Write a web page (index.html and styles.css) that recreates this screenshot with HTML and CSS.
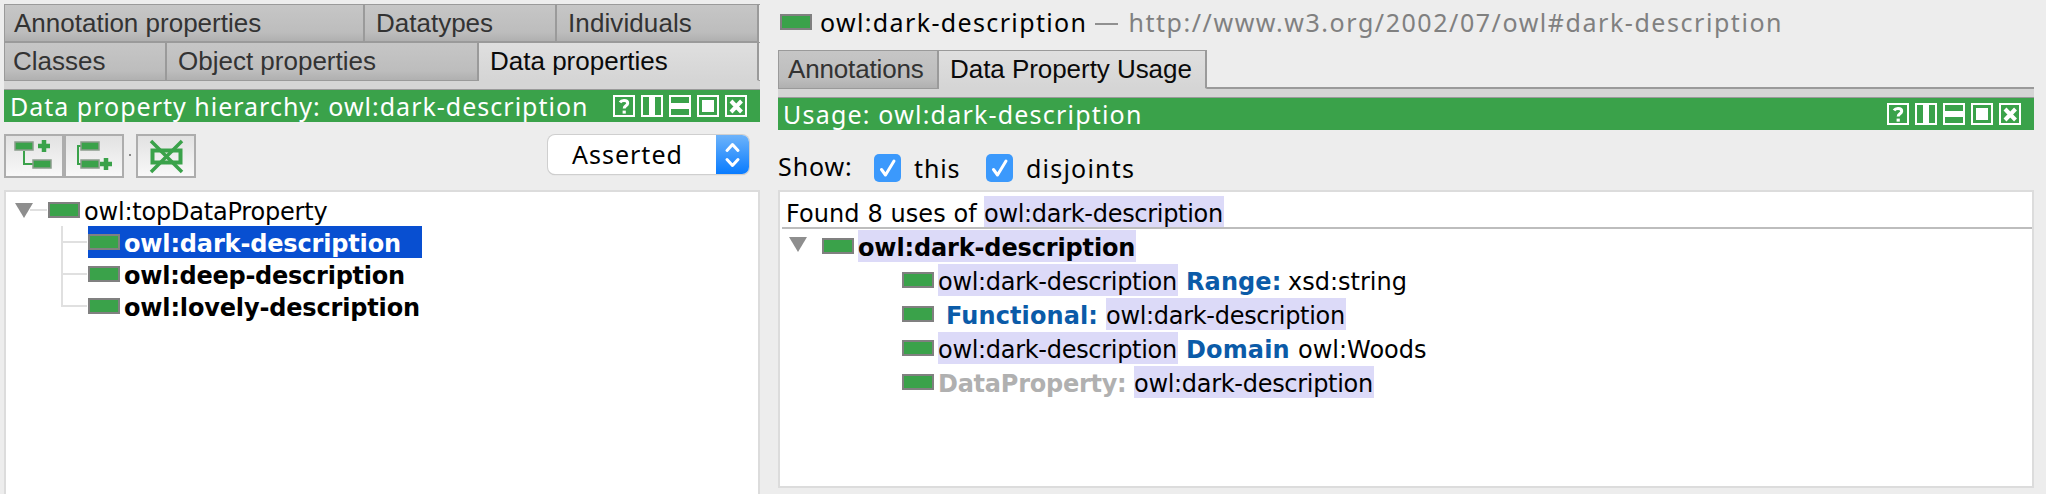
FILE: index.html
```html
<!DOCTYPE html>
<html lang="en">
<head>
<meta charset="utf-8">
<title>Data properties</title>
<link rel="stylesheet" href="styles.css">
</head>
<body>
<svg class="defs" width="0" height="0">
  <symbol id="win-help" viewBox="0 0 22 22"><path d="M1 1h20v20H1z" fill="none" stroke="#fff" stroke-width="2"/><path d="M7 7.400C8 5.800 9.500 5.500 11 5.500c2.300 0 3.700 1 3.700 2.700 0 2.600-3.500 2.600-3.500 5.300" fill="none" stroke="#fff" stroke-width="3"/><path d="M9.600 15.600h3.200v3H9.600z" fill="#fff"/></symbol>
  <symbol id="win-vert" viewBox="0 0 22 22"><path d="M1 1h20v20H1z" fill="none" stroke="#fff" stroke-width="2"/><path d="M8 2h6v18H8z" fill="#fff"/></symbol>
  <symbol id="win-horiz" viewBox="0 0 22 22"><path d="M1 1h20v20H1z" fill="none" stroke="#fff" stroke-width="2"/><path d="M2 8h18v6H2z" fill="#fff"/></symbol>
  <symbol id="win-max" viewBox="0 0 22 22"><path d="M1 1h20v20H1z" fill="none" stroke="#fff" stroke-width="2"/><path d="M5 5h12v12H5z" fill="#fff"/></symbol>
  <symbol id="win-close" viewBox="0 0 22 22"><path d="M1 1h20v20H1z" fill="none" stroke="#fff" stroke-width="2"/><path d="M6 6l10.500 11M16.500 6L6 17" fill="none" stroke="#fff" stroke-width="4"/></symbol>
  <symbol id="check" viewBox="0 0 26 28"><path d="M7 15.500l4 5.500L19.500 7" fill="none" stroke="#fff" stroke-width="3" stroke-linecap="round" stroke-linejoin="round"/></symbol>
</svg>

<section class="panel left">
  <div class="tabs">
    <div class="tabrow first">
      <div class="tab t-annprops">Annotation properties</div>
      <div class="tab t-datatypes">Datatypes</div>
      <div class="tab t-individuals">Individuals</div>
    </div>
    <div class="tabrow second">
      <div class="tab t-classes">Classes</div>
      <div class="tab t-objprops">Object properties</div>
      <div class="tab t-dataprops active">Data properties</div>
      <div class="tabrest"></div>
    </div>
    <div class="strip"></div>
  </div>
  <div class="titlebar">
    <span class="title hier">Data property hierarchy: owl:dark-description</span>
    <span class="winbtns">
      <svg><use href="#win-help"/></svg><svg><use href="#win-vert"/></svg><svg><use href="#win-horiz"/></svg><svg><use href="#win-max"/></svg><svg><use href="#win-close"/></svg>
    </span>
  </div>
  <div class="toolbar">
    <div class="btngroup">
      <button class="tool"><svg width="56" height="40" viewBox="6 136 56 40"><path d="M24 151v13h9" fill="none" stroke="#3aa24a" stroke-width="2"/><path d="M15 142h18v8H15zM33 160h18v8H33z" fill="#3aa24a" stroke="#8b9c8c" stroke-width="1.500"/><path d="M38 146h12M44 140v12" stroke="#3aa24a" stroke-width="4.500"/></svg></button>
      <button class="tool"><svg width="56" height="40" viewBox="66 136 56 40"><path d="M81 146h-3v18h3" fill="none" stroke="#3aa24a" stroke-width="2"/><path d="M81 142h18v8H81zM81 160h18v8H81z" fill="#3aa24a" stroke="#8b9c8c" stroke-width="1.500"/><path d="M100 164h12M106 158v12" stroke="#3aa24a" stroke-width="4.500"/></svg></button>
    </div>
    <i class="dot"></i>
    <button class="tool"><svg width="56" height="40" viewBox="138 136 56 40"><path d="M152.500 150.500h28v12h-28z" fill="none" stroke="#3aa24a" stroke-width="4"/><path d="M151 141l31 31M182 141l-31 31" stroke="#3aa24a" stroke-width="3.500"/></svg></button>
    <div class="combo"><span>Asserted</span><svg width="33" height="40" viewBox="0 0 33 40"><path d="M11 15.500l5.500-6 5.500 6M11 24.500l5.500 6 5.500-6" fill="none" stroke="#fff" stroke-width="3" stroke-linecap="round" stroke-linejoin="round"/></svg></div>
  </div>
  <div class="tree box">
    <div class="node root"><svg class="tri" width="18" height="15"><path d="M0 0h18L9 15z" fill="#8e8e8e"/></svg><i class="stub"></i><i class="prop"></i><span class="label top">owl:topDataProperty</span></div>
    <ul class="children">
      <li class="node sel"><span class="hit"><i class="prop"></i><span class="label">owl:dark-description</span></span></li>
      <li class="node"><span class="hit"><i class="prop"></i><span class="label deep">owl:deep-description</span></span></li>
      <li class="node"><span class="hit"><i class="prop"></i><span class="label">owl:lovely-description</span></span></li>
    </ul>
  </div>
</section>

<section class="panel right">
  <header class="entity"><i class="prop small"></i><span class="name">owl:dark-description</span><span class="dash"></span><span class="iri">http://www.w3.org/2002/07/owl#dark-description</span></header>
  <div class="tabs">
    <div class="tabrow third">
      <div class="tab t-annotations">Annotations</div>
      <div class="tab t-usage active">Data Property Usage</div>
      <div class="tabrest"></div>
    </div>
    <div class="strip"></div>
  </div>
  <div class="titlebar">
    <span class="title usage">Usage: owl:dark-description</span>
    <span class="winbtns">
      <svg><use href="#win-help"/></svg><svg><use href="#win-vert"/></svg><svg><use href="#win-horiz"/></svg><svg><use href="#win-max"/></svg><svg><use href="#win-close"/></svg>
    </span>
  </div>
  <div class="filters">
    <span class="show">Show:</span>
    <label><svg class="cb"><use href="#check"/></svg><span class="this">this</span></label>
    <label><svg class="cb"><use href="#check"/></svg><span class="disj">disjoints</span></label>
  </div>
  <div class="results box">
    <div class="found"><span class="foundtxt">Found 8 uses of</span><mark>owl:dark-description</mark></div>
    <div class="use head"><svg class="tri" width="18" height="15"><path d="M0 0h18L9 15z" fill="#8e8e8e"/></svg><i class="prop"></i><mark class="strong">owl:dark-description</mark></div>
    <div class="use"><i class="prop"></i><mark>owl:dark-description</mark><b class="kw range">Range:</b><span class="val">xsd:string</span></div>
    <div class="use"><i class="prop"></i><b class="kw func">Functional:</b><mark>owl:dark-description</mark></div>
    <div class="use"><i class="prop"></i><mark>owl:dark-description</mark><b class="kw domain">Domain</b><span class="val">owl:Woods</span></div>
    <div class="use"><i class="prop"></i><b class="kw decl">DataProperty:</b><mark>owl:dark-description</mark></div>
  </div>
</section>
</body>
</html>
```
FILE: styles.css
```css
* { box-sizing: border-box; }
body {
  margin: 0;
  width: 2046px;
  height: 494px;
  overflow: hidden;
  display: flex;
  gap: 18px;
  padding-left: 4px;
  background: #ededed;
  color: #000;
  font-family: "DejaVu Sans", sans-serif;
  font-size: 24px;
  white-space: nowrap;
}
.defs { position: absolute; }
svg { display: block; flex: none; }
.panel { display: flex; flex-direction: column; height: 494px; }
.left { width: 756px; padding-top: 4px; }
.right { width: 1256px; }

/* tabs */
.tabrow { display: flex; }
.tab {
  height: 37px;
  padding-left: 10px;
  border-right: 2px solid #9a9a9a;
  border-bottom: 1px solid #9a9a9a;
  background: linear-gradient(#c6c6c6, #bdbdbd 75%, #b0b0b0);
  color: #333;
  font: 26px/36px "Liberation Sans", sans-serif;
}
.tab:first-child { border-left: 1px solid #9a9a9a; }
.tab.active {
  background: linear-gradient(#dfdfdf, #d5d5d5);
  border-bottom-color: #d5d5d5;
  color: #0a0a0a;
}
.first, .second { border-top: 1px solid #9a9a9a; }
.second .tab { height: 38px; }
.t-annprops { width: 361px; padding-left: 9px; }
.t-datatypes { width: 192px; padding-left: 11px; }
.t-individuals { width: 202px; padding-left: 11px; letter-spacing: .1px; }
.t-classes { width: 163px; padding-left: 8px; }
.t-objprops { width: 312px; padding-left: 11px; }
.t-dataprops { width: 280px; padding-left: 11px; }
.tabrest { flex: 1; border-bottom: 1px solid #9a9a9a; }
.strip {
  height: 9px;
  background: #d5d5d5;
  border-bottom: 1px solid #9a9a9a;
}
.third .tab { height: 39px; border-top: 1px solid #9a9a9a; }
.third .tabrest { border-bottom-width: 2px; }
.t-annotations { width: 161px; padding-left: 9px; letter-spacing: -.15px; }
.t-usage { width: 268px; padding-left: 11px; letter-spacing: -.05px; }

/* view title bars */
.titlebar {
  height: 32px;
  padding: 0 13px 0 6px;
  display: flex;
  align-items: center;
  justify-content: space-between;
  background: #3aa24a;
  color: #fff;
}
.right .titlebar { padding-left: 5px; }
.title { font: 25px/32px "Noto Sans", sans-serif; }
.hier { letter-spacing: 1px; }
.usage { letter-spacing: 1.2px; }
.winbtns { display: flex; gap: 6px; }
.winbtns svg { width: 22px; height: 22px; }

/* toolbar */
.toolbar { height: 68px; padding: 12px 11px 12px 0; display: flex; align-items: flex-start; }
.btngroup { display: flex; }
.tool {
  width: 60px;
  height: 44px;
  padding: 0;
  border: 2px solid #adadad;
  background: linear-gradient(#e2e2e2, #f8f8f8);
}
.dot { width: 2px; height: 2px; margin: 20px 5px 0; background: #888; }
.combo {
  margin: 1px 0 0 auto;
  width: 201px;
  height: 39px;
  display: flex;
  justify-content: space-between;
  background: #fff;
  border-radius: 7px;
  box-shadow: 0 0 0 1px #cfcfcf, 0 1px 1px #b5b5b5;
  overflow: hidden;
}
.combo span { padding-left: 24px; font: 25px/38px "Noto Sans", sans-serif; letter-spacing: 1px; }
.combo svg { background: linear-gradient(#6db3fa, #067aff); }

.box { background: #fff; border: 2px solid #dcdcdc; flex: 1; }

/* entity icon */
.prop { flex: none; width: 32px; height: 16px; margin-top: 8px; background: #3aa24a; border: 2px solid #808080; }
.small { margin-top: 14px; }

/* hierarchy tree */
.tree { padding: 2px 0 0 9px; border-bottom: 0; }
.node { display: flex; height: 32px; }
.tri { margin: 9px 0 0; }
.stub { width: 17px; height: 2px; margin: 15px 1px 0 -3px; background: #e0e0e0; }
.label { padding: 4px 0 0 4px; line-height: 28px; font-weight: bold; letter-spacing: -0.16px; }
.label.top { font-weight: normal; letter-spacing: -0.2px; }
.label.deep { letter-spacing: -0.25px; }
.children { list-style: none; margin: 0 0 0 46px; padding: 0; }
.children .node { border-left: 2px solid #e0e0e0; }
.children .node:last-child { border-image: linear-gradient(#e0e0e0 17px, transparent 17px) 1; border-width: 0 0 0 2px; border-style: solid; }
.children .node::before { content: ""; width: 24px; height: 2px; margin: 15px 1px 0 0; background: #e0e0e0; }
.hit { display: flex; height: 32px; }
.sel .hit { width: 334px; background: #084fd1; color: #fff; }

/* entity header */
.entity { display: flex; height: 50px; padding-left: 2px; font: 25px/34px "Noto Sans", sans-serif; }
.entity .name { padding: 5px 0 0 8px; letter-spacing: 1.36px; }
.entity .dash { width: 23px; height: 2px; margin: 23px 10px 0 8px; background: #909090; }
.entity .iri { padding-top: 5px; letter-spacing: 1.55px; color: #808080; }

/* usage filters */
.filters { display: flex; height: 60px; padding-top: 24px; font: 25px/28px "Noto Sans", sans-serif; }
.filters label { display: flex; }
.cb { width: 27px; height: 28px; margin-right: 1px; background: #3b99fc; border-radius: 5px; }
.show { width: 96px; letter-spacing: .9px; margin-top: -2px; }
.this { width: 72px; padding-left: 12px; margin-right: 12px; box-sizing: content-box; letter-spacing: .86px; }
.this { width: 72px; margin-right: 0; }
.disj { padding-left: 12px; letter-spacing: 1.21px; }

/* usage results */
.results { flex: none; height: 298px; padding: 4px 0 0 2px; }
mark { background: #dcdaf8; color: #000; height: 32px; padding: 4px 0 0; line-height: 28px; letter-spacing: -0.3px; width: 240px; }
mark.strong { width: 278px; font-weight: bold; letter-spacing: -0.14px; }
.found { display: flex; height: 33px; border-bottom: 2px solid #bdbdbd; margin-bottom: 1px; }
.found mark { height: 31px; }
.foundtxt { width: 202px; padding: 4px 0 0 4px; line-height: 28px; letter-spacing: .08px; }
.use { display: flex; height: 32px; margin-bottom: 2px; padding-left: 120px; }
.use .prop { margin-right: 4px; }
.use.head { padding-left: 7px; }
.use .tri { margin: 7px 15px 0 0; }
.kw { color: #0b5ba8; padding-top: 4px; line-height: 28px; }
.val { padding-top: 4px; line-height: 28px; }
.range { width: 110px; padding-left: 8px; letter-spacing: .1px; }
.domain { width: 120px; padding-left: 8px; letter-spacing: .15px; }
.func { width: 168px; padding-left: 8px; letter-spacing: .1px; }
.decl { width: 196px; color: #b0b0b0; letter-spacing: -.25px; }
```
